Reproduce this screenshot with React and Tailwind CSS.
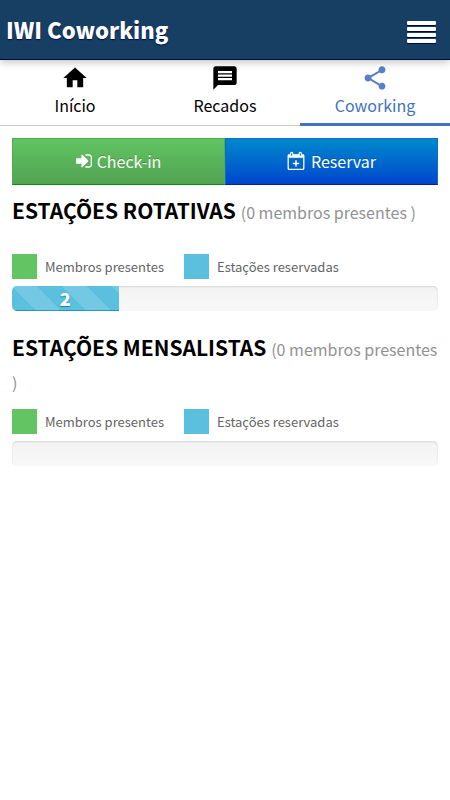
import React from 'react';
import { MdHome, MdMessage, MdShare } from 'react-icons/md';

const tabs = [
  { label: 'Início', icon: MdHome, href: '#inicio' },
  { label: 'Recados', icon: MdMessage, href: '#recados' },
  { label: 'Coworking', icon: MdShare, href: '#coworking', active: true },
];

const sections = [
  { title: 'ESTAÇÕES ROTATIVAS', present: 0, reserved: 2, capacity: 8 },
  { title: 'ESTAÇÕES MENSALISTAS', present: 0, reserved: 0, capacity: 8 },
];

function SignInIcon() {
  return (
    <svg className="w-4 h-5" viewBox="0 128 1536 1536" fill="currentColor" aria-hidden="true">
      <path d="M1184 896q0 26-19 45l-544 544q-19 19-45 19t-45-19-19-45v-288h-448q-26 0-45-19t-19-45v-384q0-26 19-45t45-19h448v-288q0-26 19-45t45-19 45 19l544 544q19 19 19 45zm352-352v704q0 119-84.5 203.5t-203.5 84.5h-320q-13 0-22.5-9.5t-9.5-22.5q0-4-1-20t-.5-26.5 3-23.5 10-19.5 20.5-6.5h320q66 0 113-47t47-113v-704q0-66-47-113t-113-47h-312l-11.5-1-11.5-3-8-5.5-7-9-2-13.5q0-4-1-20t-.5-26.5 3-23.5 10-19.5 20.5-6.5h320q119 0 203.5 84.5t84.5 203.5z" />
    </svg>
  );
}

function CalendarPlusIcon() {
  return (
    <svg className="w-[18px] h-5" viewBox="0 0 18 20" fill="none" stroke="currentColor" aria-hidden="true">
      <rect x="1.2" y="4" width="15.6" height="14.4" rx="0.8" strokeWidth="1.3" />
      <path d="M1 3.8h16v3H1z" fill="currentColor" stroke="none" />
      <rect x="3.6" y="1.4" width="2.2" height="4" rx="1" strokeWidth="1.1" fill="#0878cf" />
      <rect x="12.2" y="1.4" width="2.2" height="4" rx="1" strokeWidth="1.1" fill="#0878cf" />
      <path d="M9 9.2v6.4M5.8 12.4h6.4" strokeWidth="1.5" />
    </svg>
  );
}

function Header() {
  return (
    <header className="relative z-10 flex h-[60px] items-center justify-between bg-[#173e63] border-b border-[#00084a] pl-[6px] pr-[14px] shadow-[0_2px_8px_rgba(0,0,0,0.25)]">
      <h1 className="pb-[2px] text-[22px] leading-8 font-black text-white [text-shadow:0_1px_1px_#00084a]">IWI Coworking</h1>
      <button type="button" aria-label="Menu" className="flex w-[29px] flex-col gap-[2px] pt-1">
        {[0, 1, 2, 3].map((i) => (
          <span key={i} className="h-1 w-full rounded-[1px] bg-white shadow-[0_1px_0_#00084a]" />
        ))}
      </button>
    </header>
  );
}

function Tabs() {
  return (
    <nav className="grid grid-cols-3">
      {tabs.map(({ label, icon: Icon, href, active }) => (
        <a
          key={label}
          href={href}
          aria-current={active ? 'page' : undefined}
          className={
            active
              ? 'flex h-[66px] flex-col items-center border-b-3 border-[#4272c4] pt-1 text-[#4272c4]'
              : 'flex h-[66px] flex-col items-center border-b border-[#cccccc] pt-1 text-black'
          }
        >
          <Icon className={active ? 'size-7 text-[#5b7fc4]' : 'size-7'} />
          <span className="text-base leading-[26px]">{label}</span>
        </a>
      ))}
    </nav>
  );
}

function Legend({ color, label }) {
  return (
    <li className="flex items-center gap-2">
      <span className={`size-[25px] ${color}`} />
      <span className="text-[13px] leading-6">{label}</span>
    </li>
  );
}

function StationSection({ title, present, reserved, capacity }) {
  const percent = (reserved / capacity) * 100;

  return (
    <section>
      <h2 className="min-h-12 text-[21px] leading-[33px] font-bold text-black">
        {title} <small className="text-base leading-none font-normal text-[#929292]">({present} membros presentes )</small>
      </h2>
      <ul className="mt-3 flex gap-5 text-[#646464]">
        <Legend color="bg-[#62c462]" label="Membros presentes" />
        <Legend color="bg-[#5bc0de]" label="Estações reservadas" />
      </ul>
      <div
        role="progressbar"
        aria-label={title}
        aria-valuemin={0}
        aria-valuemax={capacity}
        aria-valuenow={reserved}
        className="mt-[7px] h-[25px] overflow-hidden rounded-[5px] bg-linear-to-b from-[#f3f3f3] to-[#f8f8f8] shadow-[inset_0_1px_2px_rgba(0,0,0,0.12)]"
      >
        {reserved > 0 && (
          <div
            className="flex h-full items-center justify-center bg-[#5bc0de] bg-[linear-gradient(45deg,rgba(255,255,255,.15)_25%,transparent_25%,transparent_50%,rgba(255,255,255,.15)_50%,rgba(255,255,255,.15)_75%,transparent_75%,transparent)] bg-size-[50px_50px] pb-[2px] text-lg leading-6 font-black text-white shadow-[inset_0_-1px_0_rgba(0,120,160,0.6)] [text-shadow:0_1px_1px_#1b7d9c]"
            style={{ width: `${percent}%` }}
          >
            {reserved}
          </div>
        )}
      </div>
    </section>
  );
}

export default function App() {
  return (
    <div className="min-h-screen bg-white font-['Noto_Sans_CJK_SC','Noto_Sans',sans-serif]">
      <Header />
      <Tabs />
      <main className="px-3 pt-3">
        <div className="grid grid-cols-2 text-base text-white">
          <button type="button" className="flex h-[47px] items-center justify-center gap-[5px] border border-[#4fae4f] border-b-[#0f8a1c] bg-linear-to-b from-[#62c462] to-[#51a351] pb-[2px] [text-shadow:0_-1px_0_rgba(0,0,0,0.2)]">
            <SignInIcon />
            Check-in
          </button>
          <button type="button" className="flex h-[47px] items-center justify-center gap-[6px] border border-[#0a6fc8] border-b-[#0a1fa0] bg-linear-to-b from-[#0088cc] to-[#0044cc] pb-[2px] [text-shadow:0_-1px_0_rgba(0,0,0,0.2)]">
            <CalendarPlusIcon />
            Reservar
          </button>
        </div>
        <div className="mt-[9px] flex flex-col gap-5">
          {sections.map((section) => (
            <StationSection key={section.title} {...section} />
          ))}
        </div>
      </main>
    </div>
  );
}
